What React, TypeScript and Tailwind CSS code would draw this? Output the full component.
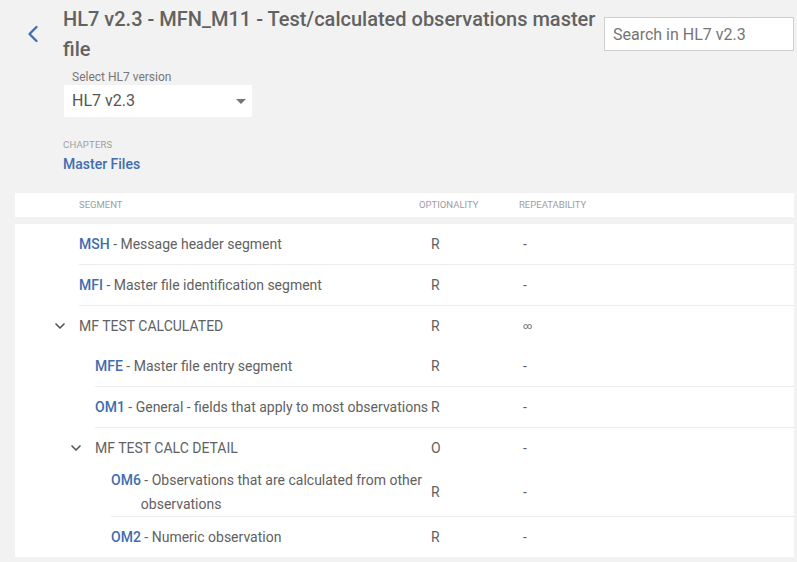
import { ChevronDown, ChevronLeft } from "lucide-react";

type Row = {
  level: 1 | 2 | 3;
  code?: string;
  desc: string;
  group?: boolean;
  opt: string;
  rep: string;
  noBorder?: boolean;
};

const ROWS: Row[] = [
  { level: 1, code: "MSH", desc: "Message header segment", opt: "R", rep: "-" },
  { level: 1, code: "MFI", desc: "Master file identification segment", opt: "R", rep: "-" },
  { level: 1, group: true, desc: "MF TEST CALCULATED", opt: "R", rep: "∞", noBorder: true },
  { level: 2, code: "MFE", desc: "Master file entry segment", opt: "R", rep: "-" },
  { level: 2, code: "OM1", desc: "General - fields that apply to most observations", opt: "R", rep: "-" },
  { level: 2, group: true, desc: "MF TEST CALC DETAIL", opt: "O", rep: "-", noBorder: true },
  { level: 3, code: "OM6", desc: "Observations that are calculated from other observations", opt: "R", rep: "-" },
  { level: 3, code: "OM2", desc: "Numeric observation", opt: "R", rep: "-", noBorder: true },
];

const indent = { 1: "pl-[64px]", 2: "pl-[80px]", 3: "pl-[96px]" };
const segW = { 1: "w-[352px]", 2: "w-[336px]", 3: "w-[320px]" };

function SegmentRow({ row }: { row: Row }) {
  return (
    <div className={`relative flex ${indent[row.level]}`}>
      {row.group && (
        <ChevronDown
          className="absolute top-1/2 -translate-y-1/2 h-4 w-4 text-[#555]"
          strokeWidth={2.5}
          style={{ left: row.level === 1 ? 37 : 53 }}
        />
      )}
      <div
        className={`flex-1 flex items-center ${row.noBorder ? "min-h-[40px]" : "min-h-[41px] border-b border-[#ececec]"}`}
      >
        <div className={`${segW[row.level]} flex text-[14px] leading-6 text-[#616161]`}>
          {row.group ? (
            <span>{row.desc}</span>
          ) : (
            <>
              <span className="font-medium text-[#3f6db0] shrink-0">{row.code}</span>
              <span>{"\u00a0- " + row.desc}</span>
            </>
          )}
        </div>
        <div className="w-[92px] text-[14px] leading-6 text-[#616161]">{row.opt}</div>
        <div className={`text-[#616161] leading-6 ${row.rep === "∞" ? "text-[9px]" : "text-[14px]"}`}>{row.rep}</div>
      </div>
    </div>
  );
}

export default function App() {
  return (
    <div
      className="w-[797px] h-[562px] bg-[#f2f2f2] overflow-hidden"
      style={{ fontFamily: "Roboto, 'Liberation Sans', sans-serif" }}
    >
      {/* Header */}
      <div className="flex items-start pt-[4px] pr-[3px]">
        <div className="w-[63px] flex justify-center pl-[3px] pt-[16px] shrink-0">
          <ChevronLeft className="h-7 w-7 text-[#3f6db0]" strokeWidth={2} />
        </div>
        <h1 className="w-[540px] text-[20px] leading-[30px] font-medium text-[#626262]">
          HL7 v2.3 - MFN_M11 - Test/calculated observations master file
        </h1>
        <input
          className="ml-auto mt-[13px] w-[190px] h-[34px] bg-white border border-[#cfcfcf] px-[8px] text-[16px] text-[#555] placeholder:text-[#757575] outline-none"
          placeholder="Search in HL7 v2.3"
        />
      </div>

      {/* Version select */}
      <div className="pl-[64px] mt-[6px]">
        <div className="pl-[8px] text-[12px] leading-[14px] text-[#777]">Select HL7 version</div>
        <div className="mt-[1px] w-[188px] h-[32px] bg-white flex items-center justify-between pl-[8px] pr-[6px]">
          <span className="text-[16px] text-[#555]">HL7 v2.3</span>
          <svg width="10" height="5" viewBox="0 0 10 5">
            <path d="M0 0h10L5 5z" fill="#757575" />
          </svg>
        </div>
      </div>

      {/* Chapters */}
      <div className="pl-[63px] mt-[22px]">
        <div className="text-[9.5px] leading-[12px] tracking-[0.2px] text-[#9e9e9e]">CHAPTERS</div>
        <div className="mt-[5px] text-[14px] leading-[16px] font-medium text-[#3f6db0]">Master Files</div>
      </div>

      {/* Table header */}
      <div className="mt-[21px] ml-[15px] mr-[3px] h-[24px] bg-white flex items-center pl-[64px] text-[9.5px] text-[#9e9e9e]">
        <div className="w-[340px]">SEGMENT</div>
        <div className="w-[100px]">OPTIONALITY</div>
        <div>REPEATABILITY</div>
      </div>

      {/* Table body */}
      <div className="mt-[7px] ml-[15px] mr-[3px] bg-white">
        {ROWS.map((row) => (
          <SegmentRow key={row.desc} row={row} />
        ))}
      </div>
    </div>
  );
}
